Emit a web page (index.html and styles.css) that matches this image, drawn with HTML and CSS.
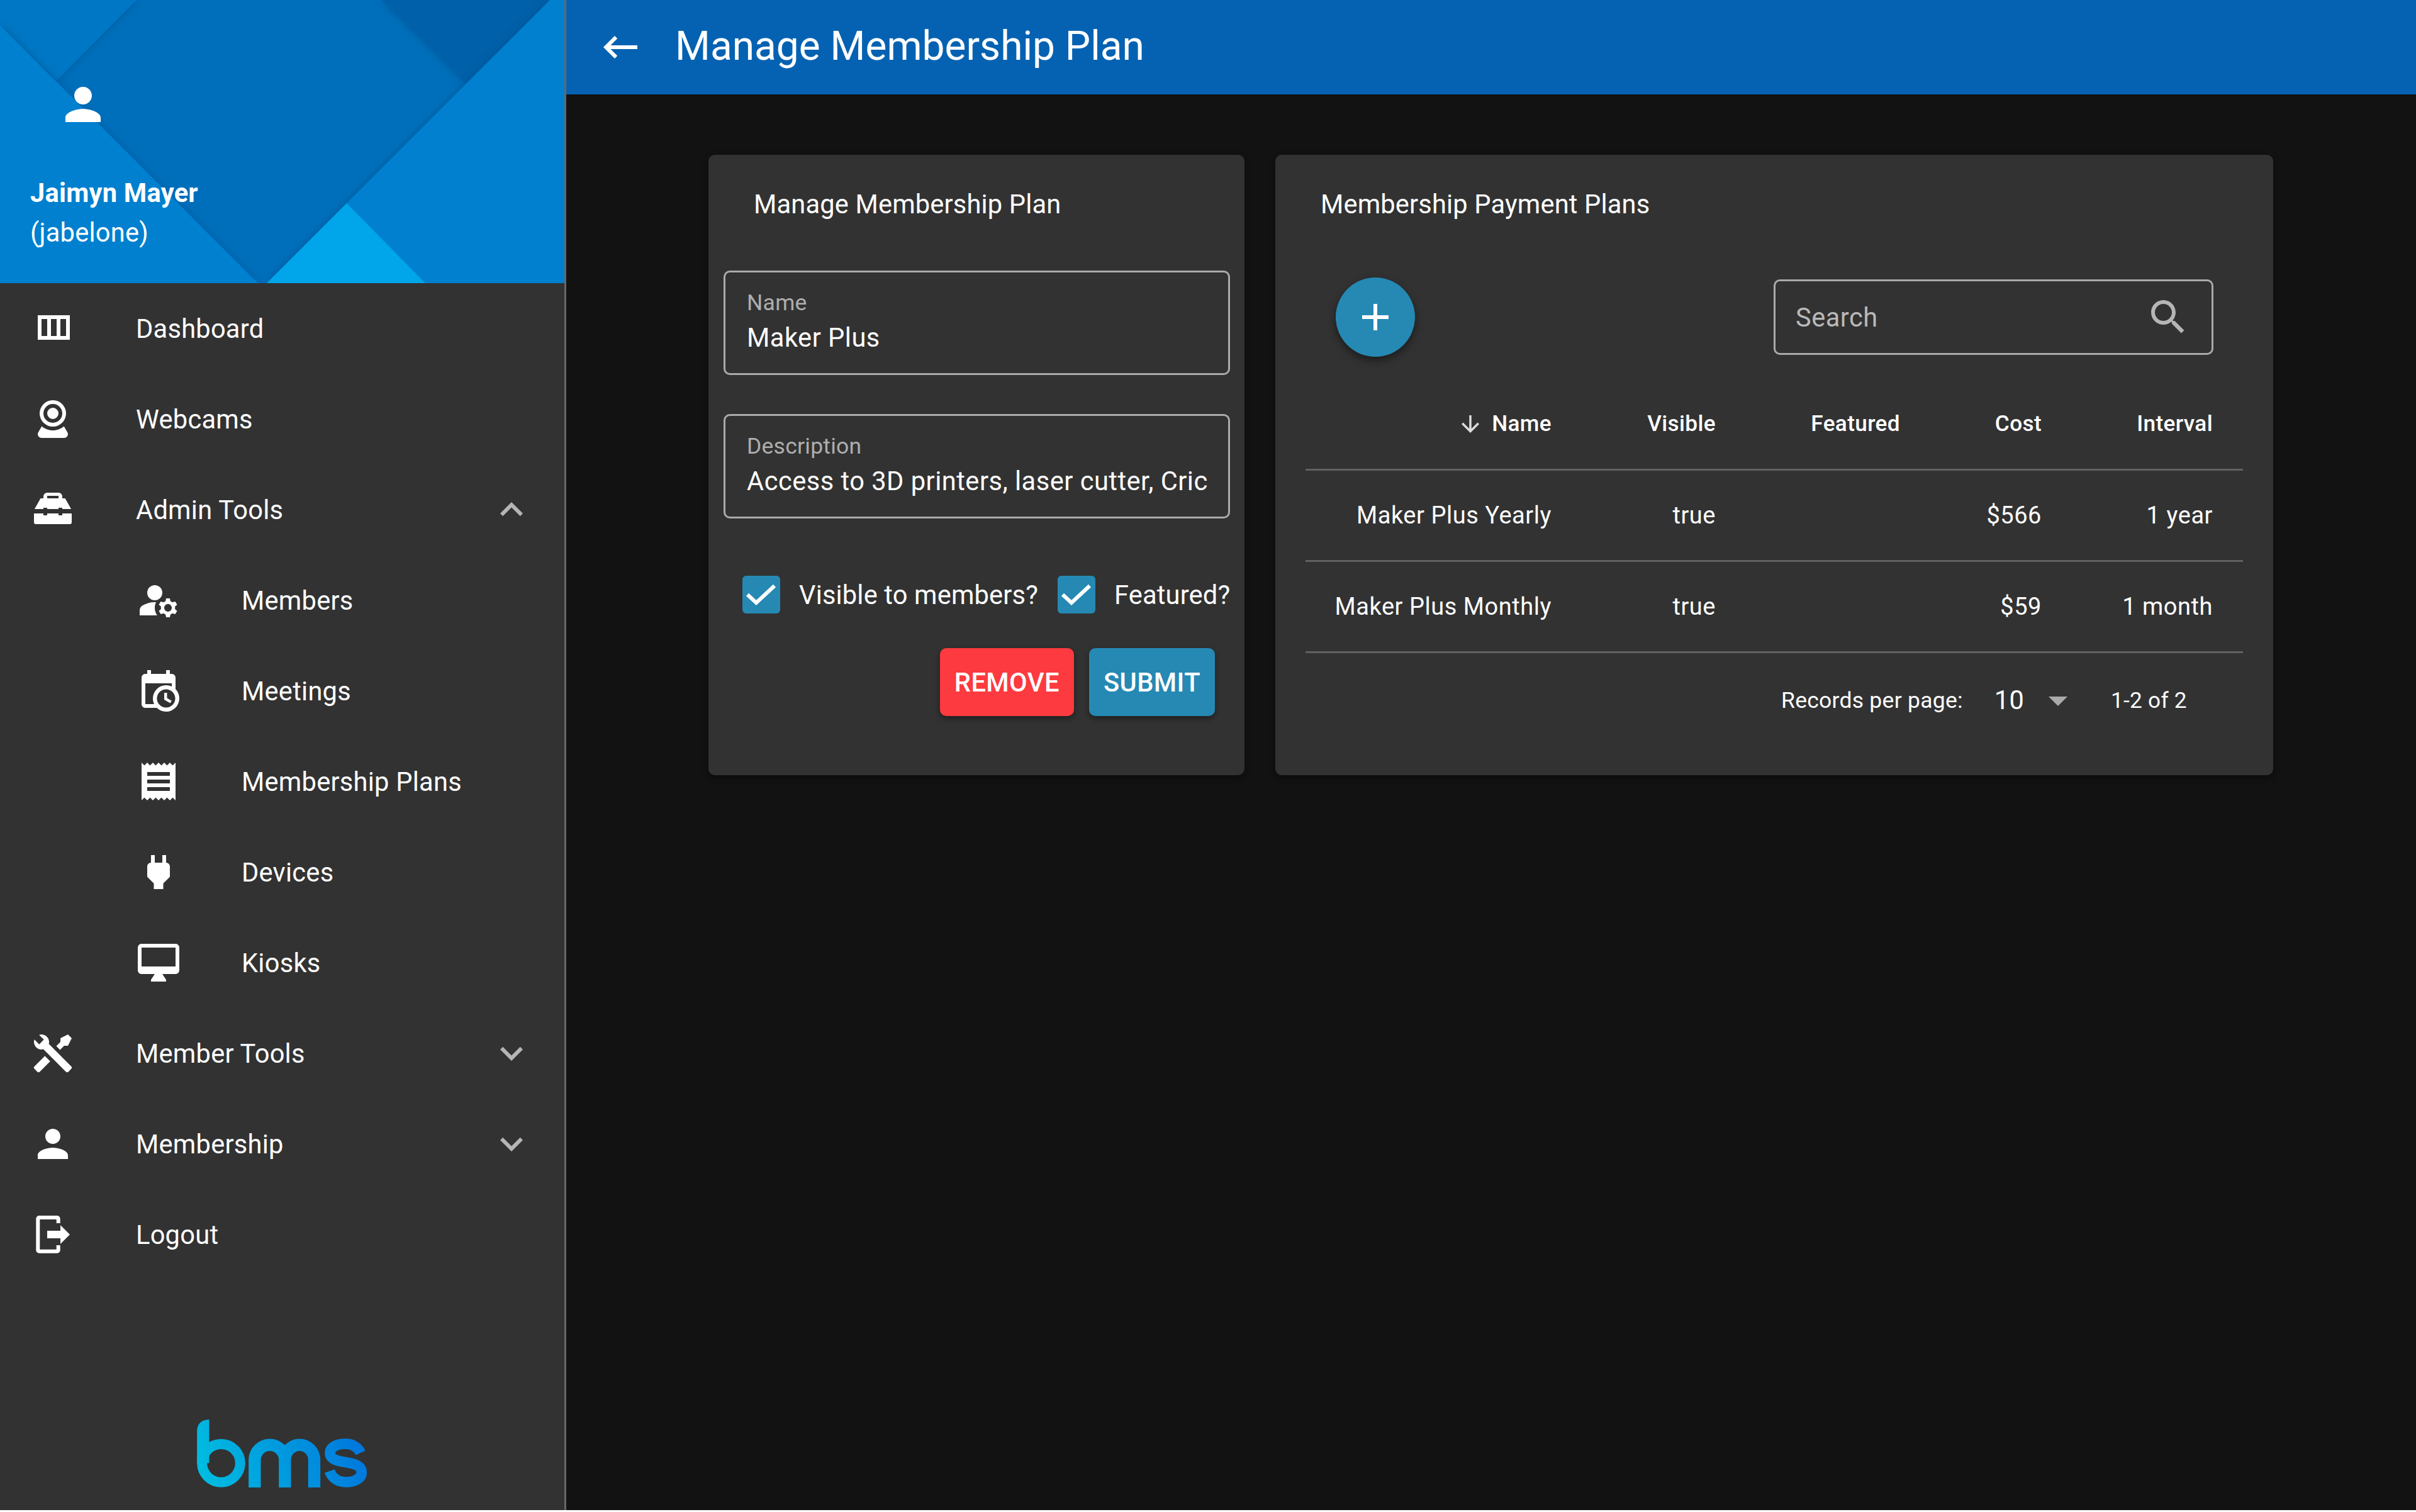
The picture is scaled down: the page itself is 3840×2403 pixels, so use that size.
FILE: index.html
```html
<!DOCTYPE html>
<html lang="en">
<head>
<meta charset="utf-8">
<title>Manage Membership Plan</title>
<link rel="stylesheet" href="styles.css">
</head>
<body>
<aside class="sidebar">
  <header class="profile">
    <svg class="profile-bg" viewBox="0 0 897 450" preserveAspectRatio="none">
      <defs>
        <filter id="edge" x="-10%" y="-10%" width="120%" height="120%"><feDropShadow dx="0" dy="0" stdDeviation="7" flood-color="#004a86" flood-opacity="0.55"/></filter>
      </defs>
      <rect width="897" height="450" fill="#006fbb"/>
      <polygon points="606,0 874,0 740,132" fill="#0060a9" filter="url(#edge)"/>
      <polygon points="0,0 217,0 90,128 0,40" fill="#0077c4" filter="url(#edge)"/>
      <polygon points="0,40 410,450 0,450" fill="#0080cf" filter="url(#edge)"/>
      <polygon points="874,0 897,0 897,450 424,450" fill="#0080ce" filter="url(#edge)"/>
      <polygon points="551,323 676,450 424,450" fill="#00a5ea"/>
    </svg>
    <svg class="profile-icon" viewBox="0 0 24 24"><path d="M12 12c2.21 0 4-1.79 4-4s-1.79-4-4-4-4 1.79-4 4 1.79 4 4 4zm0 2c-2.67 0-8 1.34-8 4v2h16v-2c0-2.66-5.33-4-8-4z"/></svg>
    <div class="profile-name">Jaimyn Mayer</div>
    <div class="profile-user">(jabelone)</div>
  </header>
  <nav class="nav">
    <a class="nav-item"><svg class="icon" viewBox="0 0 72 72"><path fill-rule="evenodd" d="M12 15h51v39H12zM18 21v27h9V21zM33 21v27h9V21zM48 21v27h9V21z"/></svg><span class="nav-label">Dashboard</span></a>
    <a class="nav-item"><svg class="icon" viewBox="0 0 24 24"><path d="M12,2A7,7 0 0,1 19,9A7,7 0 0,1 12,16A7,7 0 0,1 5,9A7,7 0 0,1 12,2M12,4A5,5 0 0,0 7,9A5,5 0 0,0 12,14A5,5 0 0,0 17,9A5,5 0 0,0 12,4M12,6A3,3 0 0,1 15,9A3,3 0 0,1 12,12A3,3 0 0,1 9,9A3,3 0 0,1 12,6M6,22A2,2 0 0,1 4,20C4,19.62 4.1,19.27 4.29,18.97L6.11,15.81C7.69,17.17 9.75,18 12,18C14.25,18 16.31,17.17 17.89,15.81L19.71,18.97C19.9,19.27 20,19.62 20,20A2,2 0 0,1 18,22H6Z"/></svg><span class="nav-label">Webcams</span></a>
    <a class="nav-item"><svg class="icon" viewBox="0 0 24 24"><path fill-rule="evenodd" d="M9 3h6a2 2 0 0 1 2 2v1h1.5l3.2 5.7H17V11h-2v.7H9V11H7v.7H2.3L5.5 6H7V5a2 2 0 0 1 2-2zM9 4.7V6h6V4.7z"/><path d="M2 14h5v1h2v-1h6v1h2v-1h5v4.7a1 1 0 0 1-1 1H3a1 1 0 0 1-1-1z"/></svg><span class="nav-label">Admin Tools</span><svg class="chevron" viewBox="0 0 24 24"><path d="M12 8l-6 6 1.41 1.41L12 10.83l4.59 4.58L18 14z"/></svg></a>
    <a class="nav-item nav-sub"><svg class="icon" viewBox="0 0 24 24"><circle cx="10" cy="8" r="4"/><path d="M10.67 13.02C10.45 13.01 10.23 13 10 13c-2.42 0-4.68.67-6.61 1.82C2.51 15.34 2 16.32 2 17.35V20h9.26c-.79-1.13-1.26-2.51-1.26-4 0-1.07.25-2.07.67-2.98z"/><path d="M20.75 16c0-.22-.03-.42-.06-.63l1.14-1.01-1-1.73-1.45.49c-.32-.27-.68-.48-1.08-.63L18 11h-2l-.3 1.49c-.4.15-.76.36-1.08.63l-1.45-.49-1 1.73 1.14 1.01c-.03.21-.06.41-.06.63s.03.42.06.63l-1.14 1.01 1 1.73 1.45-.49c.32.27.68.48 1.08.63L16 21h2l.3-1.49c.4-.15.76-.36 1.08-.63l1.45.49 1-1.73-1.14-1.01c.03-.21.06-.41.06-.63zM17 18c-1.1 0-2-.9-2-2s.9-2 2-2 2 .9 2 2-.9 2-2 2z"/></svg><span class="nav-label">Members</span></a>
    <a class="nav-item nav-sub"><svg class="icon" viewBox="0 0 24 24"><path d="M15,13H16.5V15.82L18.94,17.23L18.19,18.53L15,16.69V13M19,8H5V19H9.67C9.24,18.09 9,17.07 9,16A7,7 0 0,1 16,9C17.07,9 18.09,9.24 19,9.67V8M5,21C3.89,21 3,20.1 3,19V5C3,3.89 3.89,3 5,3H6V1H8V3H16V1H18V3H19A2,2 0 0,1 21,5V11.1C22.24,12.36 23,14.09 23,16A7,7 0 0,1 16,23C14.09,23 12.36,22.24 11.1,21H5M16,11.15A4.85,4.85 0 0,0 11.15,16C11.15,18.68 13.32,20.85 16,20.85A4.85,4.85 0 0,0 20.85,16C20.85,13.32 18.68,11.15 16,11.15Z"/></svg><span class="nav-label">Meetings</span></a>
    <a class="nav-item nav-sub"><svg class="icon" viewBox="0 0 24 24"><path d="M18 17H6v-2h12v2zm0-4H6v-2h12v2zm0-4H6V7h12v2zM3 22l1.5-1.5L6 22l1.5-1.5L9 22l1.5-1.5L12 22l1.5-1.5L15 22l1.5-1.5L18 22l1.5-1.5L21 22V2l-1.5 1.5L18 2l-1.5 1.5L15 2l-1.5 1.5L12 2l-1.5 1.5L9 2 7.5 3.5 6 2 4.5 3.5 3 2v20z"/></svg><span class="nav-label">Membership Plans</span></a>
    <a class="nav-item nav-sub"><svg class="icon" viewBox="0 0 24 24"><path d="M16.01 7L16 3h-2v4h-4V3H8v4h-.01C7 6.99 6 7.99 6 8.99v5.49L9.5 18v3h5v-3l3.5-3.51v-5.5c0-1-1-2-1.99-1.99z"/></svg><span class="nav-label">Devices</span></a>
    <a class="nav-item nav-sub"><svg class="icon" viewBox="0 0 24 24"><path d="M21 2H3c-1.1 0-2 .9-2 2v12c0 1.1.9 2 2 2h7l-2 3v1h8v-1l-2-3h7c1.1 0 2-.9 2-2V4c0-1.1-.9-2-2-2zm0 12H3V4h18v10z"/></svg><span class="nav-label">Kiosks</span></a>
    <a class="nav-item"><svg class="icon" viewBox="0 0 24 24"><path d="M21.71 20.29L20.29 21.71A1 1 0 0 1 18.88 21.71L7 9.85A3.81 3.81 0 0 1 6 10A4 4 0 0 1 2.22 4.7L4.76 7.24L5.29 6.71L6.71 5.29L7.24 4.76L4.7 2.22A4 4 0 0 1 10 6A3.81 3.81 0 0 1 9.85 7L21.71 18.88A1 1 0 0 1 21.71 20.29M2.29 18.88A1 1 0 0 0 2.29 20.29L3.71 21.71A1 1 0 0 0 5.12 21.71L10.59 16.25L7.76 13.42M20 2L16 4V6L13.83 8.17L15.83 10.17L18 8H20L22 4Z"/></svg><span class="nav-label">Member Tools</span><svg class="chevron" viewBox="0 0 24 24"><path d="M16.59 8.59L12 13.17 7.41 8.59 6 10l6 6 6-6z"/></svg></a>
    <a class="nav-item"><svg class="icon" viewBox="0 0 24 24"><path d="M12 12c2.21 0 4-1.79 4-4s-1.79-4-4-4-4 1.79-4 4 1.79 4 4 4zm0 2c-2.67 0-8 1.34-8 4v2h16v-2c0-2.66-5.33-4-8-4z"/></svg><span class="nav-label">Membership</span><svg class="chevron" viewBox="0 0 24 24"><path d="M16.59 8.59L12 13.17 7.41 8.59 6 10l6 6 6-6z"/></svg></a>
    <a class="nav-item"><svg class="icon" viewBox="0 0 72 72"><path d="M14.3 6H42.7a5 5 0 0 1 5 5v7h-6V12H15.3v47.7h26.4V53h6v7.7a5 5 0 0 1-5 5H14.3a5 5 0 0 1-5-5V11a5 5 0 0 1 5-5z"/><path d="M27 30h21v-9l15 15-15 15v-9H27z"/></svg><span class="nav-label">Logout</span></a>
  </nav>
  <svg class="logo" viewBox="340 168 812 324">
    <defs>
      <linearGradient id="bms" gradientUnits="userSpaceOnUse" x1="340" y1="480" x2="1152" y2="200">
        <stop offset="0" stop-color="#00c0e0"/><stop offset="1" stop-color="#0072dc"/>
      </linearGradient>
    </defs>
    <path fill="url(#bms)" d="M398 168Q340 170 340 226V376H398Z"/>
    <g fill="none" stroke="url(#bms)">
      <circle cx="455" cy="376" r="91" stroke-width="48"/>
      <path stroke-width="58" d="M615 492V361A72 72 0 0 1 759 361V492M759 361A70 72 0 0 1 899 361V492"/>
      <path stroke-width="50" d="M1120 327C1105 295 1075 284 1046 284C1000 284 974 304 974 328C974 358 1010 366 1050 372C1095 380 1125 388 1125 420C1125 450 1090 466 1050 466C1015 466 985 450 972 414"/>
    </g>
  </svg>
</aside>
<div class="page">
  <header class="topbar">
    <svg class="back" viewBox="0 0 24 24"><path d="M21,11H6.83L10.41,7.41L9,6L3,12L9,18L10.41,16.59L6.83,13H21V11Z"/></svg>
    <h1 class="topbar-title">Manage Membership Plan</h1>
  </header>
  <main class="content">
    <section class="card card-form">
      <h2 class="card-title form-title">Manage Membership Plan</h2>
      <div class="field">
        <span class="field-label">Name</span>
        <span class="field-value">Maker Plus</span>
      </div>
      <div class="field field-second">
        <span class="field-label">Description</span>
        <span class="field-value">Access to 3D printers, laser cutter, Cric</span>
      </div>
      <div class="checks">
        <svg class="checkbox" viewBox="0 0 60 60"><path d="M8 30L22 43L51 16"/></svg>
        <span class="check-label">Visible to members?</span>
        <svg class="checkbox checkbox-second" viewBox="0 0 60 60"><path d="M8 30L22 43L51 16"/></svg>
        <span class="check-label">Featured?</span>
      </div>
      <div class="actions">
        <button class="btn btn-remove">REMOVE</button>
        <button class="btn btn-submit">SUBMIT</button>
      </div>
    </section>
    <section class="card card-table">
      <h2 class="card-title table-title">Membership Payment Plans</h2>
      <div class="toolbar">
        <button class="fab"><svg class="icon" viewBox="0 0 24 24"><path d="M19 13h-6v6h-2v-6H5v-2h6V5h2v6h6v2z"/></svg></button>
        <div class="search">
          <span class="search-text">Search</span>
          <svg class="search-icon" viewBox="0 0 24 24"><path d="M15.5 14h-.79l-.28-.27C15.41 12.59 16 11.11 16 9.5 16 5.91 13.09 3 9.5 3S3 5.91 3 9.5 5.91 16 9.5 16c1.61 0 3.09-.59 4.23-1.57l.27.28v.79l5 4.99L20.49 19l-4.99-5zm-6 0C7.01 14 5 11.99 5 9.5S7.01 5 9.5 5 14 7.01 14 9.5 11.99 14 9.5 14z"/></svg>
        </div>
      </div>
      <table class="plans">
        <colgroup><col class="col-name"><col class="col-visible"><col class="col-featured"><col class="col-cost"><col class="col-interval"></colgroup>
        <thead>
          <tr>
            <th><svg class="sort-icon" viewBox="0 0 24 24"><path d="M20 12l-1.41-1.41L13 16.17V4h-2v12.17l-5.58-5.59L4 12l8 8 8-8z"/></svg>Name</th>
            <th>Visible</th><th>Featured</th><th>Cost</th><th>Interval</th>
          </tr>
        </thead>
        <tbody>
          <tr><td>Maker Plus Yearly</td><td>true</td><td></td><td>$566</td><td>1 year</td></tr>
          <tr><td>Maker Plus Monthly</td><td>true</td><td></td><td>$59</td><td>1 month</td></tr>
        </tbody>
      </table>
      <div class="pager">
        <span class="pager-label">Records per page:</span>
        <span class="pager-size">10</span>
        <svg class="pager-arrow" viewBox="0 0 24 24"><path d="M7 10l5 5 5-5z"/></svg>
        <span class="pager-range">1-2 of 2</span>
      </div>
    </section>
  </main>
</div>
</body>
</html>
```
FILE: styles.css
```css
* { box-sizing: border-box; }
html { margin: 0; height: 100%; background: #fff; }
body {
  margin: 0;
  display: flex;
  height: 2400px;
  overflow: hidden;
  background: #121212;
  color: #fff;
  font-family: Roboto, "Liberation Sans", sans-serif;
  font-size: 41.6px;
  letter-spacing: 0.006em;
}
svg { fill: currentColor; flex: none; display: block; }

.sidebar {
  width: 900px;
  flex: none;
  display: flex;
  flex-direction: column;
  background: #323232;
  border-right: 3px solid #666;
}
.profile { position: relative; height: 450px; padding: 124px 0 0 48px; flex: none; overflow: hidden; }
.profile-bg { position: absolute; inset: 0; width: 100%; height: 100%; }
.profile-icon { position: relative; width: 84px; height: 84px; margin-left: 42px; }
.profile-name { position: relative; margin-top: 68px; line-height: 62px; font-weight: 700; }
.profile-user { position: relative; line-height: 63px; }

.nav { display: flex; flex-direction: column; }
.nav-item { display: flex; align-items: center; height: 144px; padding: 0 48px; }
.nav-sub { padding-left: 216px; }
.icon { width: 72px; height: 72px; }
.nav-label { flex: 1; margin-left: 96px; }
.chevron { width: 72px; height: 72px; color: #b5b5b5; }
.logo { width: 271px; height: 108px; margin-top: auto; margin-bottom: 36px; align-self: center; }

.page { flex: 1; display: flex; flex-direction: column; min-width: 0; }
.topbar { height: 150px; flex: none; display: flex; align-items: center; padding-left: 50px; background: #0562b2; }
.back { width: 72px; height: 72px; }
.topbar-title { margin: 0 0 4px 51px; font-size: 64px; font-weight: 400; letter-spacing: 0; }

.content { display: flex; gap: 49px; align-items: flex-start; padding: 96px 0 0 226px; }
.card { height: 986px; background: #323232; border-radius: 10px; box-shadow: 0 4px 12px rgba(0,0,0,.4); }
.card-title { margin: 0; font-size: 41.6px; font-weight: 400; line-height: 62px; letter-spacing: 0.004em; }
.card-form { width: 852px; padding: 48px 23px 0 24px; }
.form-title { margin-left: 48px; }
.card-table { width: 1586px; padding: 48px 48px 0; }
.table-title { margin-left: 24px; }

.field {
  height: 166px;
  margin-top: 74px;
  padding: 29px 0 0 34px;
  display: flex;
  flex-direction: column;
  gap: 12px;
  border: 3px solid #aaa;
  border-radius: 10px;
  white-space: nowrap;
  overflow: hidden;
}
.field-second { margin-top: 62px; }
.field-label { font-size: 35.5px; line-height: 38px; color: #aeaeae; }
.field-value { line-height: 50px; letter-spacing: 0.012em; }

.checks { display: flex; align-items: center; height: 60px; margin-top: 91px; padding-left: 30px; white-space: nowrap; }
.checkbox { width: 60px; height: 60px; border-radius: 6px; background: #2589b3; fill: none; stroke: #fff; stroke-width: 6px; }
.checkbox-second { margin-left: 31px; }
.check-label { margin-left: 30px; letter-spacing: 0.004em; }

.actions { display: flex; justify-content: flex-end; gap: 24px; margin-top: 55px; padding-right: 24px; }
.btn {
  height: 108px;
  padding: 0 23px;
  border: 0;
  border-radius: 10px;
  color: #fff;
  font: 500 41.6px Roboto, "Liberation Sans", sans-serif;
  letter-spacing: 0.01em;
  box-shadow: 0 4px 10px rgba(0,0,0,.4);
}
.btn-remove { background: #fc3a3f; }
.btn-submit { background: #2589b3; }

.toolbar { display: flex; align-items: center; justify-content: space-between; height: 126px; margin-top: 85px; padding: 0 47px 0 48px; }
.fab {
  width: 126px;
  height: 126px;
  display: flex;
  align-items: center;
  justify-content: center;
  padding: 0;
  border: 0;
  border-radius: 50%;
  color: #fff;
  background: #2589b3;
  box-shadow: 0 6px 14px rgba(0,0,0,.45);
}
.search { width: 699px; height: 120px; display: flex; align-items: center; justify-content: space-between; padding: 0 33px 0 32px; border: 3px solid #aaa; border-radius: 10px; }
.search-text { color: #b9b9b9; letter-spacing: 0.012em; }
.search-icon { width: 72px; height: 72px; color: #b5b5b5; }

.plans { width: 1490px; table-layout: fixed; border-collapse: collapse; margin-top: 35px; font-size: 38px; letter-spacing: 0.014em; }
.col-name { width: 439px; }
.col-visible { width: 261px; }
.col-featured { width: 293px; }
.col-cost { width: 225px; }
.col-interval { width: 272px; }
.plans th, .plans td { padding: 0 48px 0 0; text-align: right; border-bottom: 3px solid #616161; white-space: nowrap; }
.plans th { height: 144px; font-size: 35.2px; font-weight: 500; letter-spacing: 0.01em; }
.plans td { height: 145px; }
.sort-icon { display: inline; width: 42px; height: 42px; margin-right: 13px; vertical-align: -10px; color: #ddd; }

.pager { display: flex; align-items: center; height: 76px; margin-top: 37px; padding-left: 756px; white-space: nowrap; }
.pager-label { font-size: 35.5px; }
.pager-size { margin-left: 50px; }
.pager-arrow { width: 72px; height: 72px; margin-left: 18px; color: #aaa; }
.pager-range { margin-left: 48px; font-size: 35.2px; }
```
